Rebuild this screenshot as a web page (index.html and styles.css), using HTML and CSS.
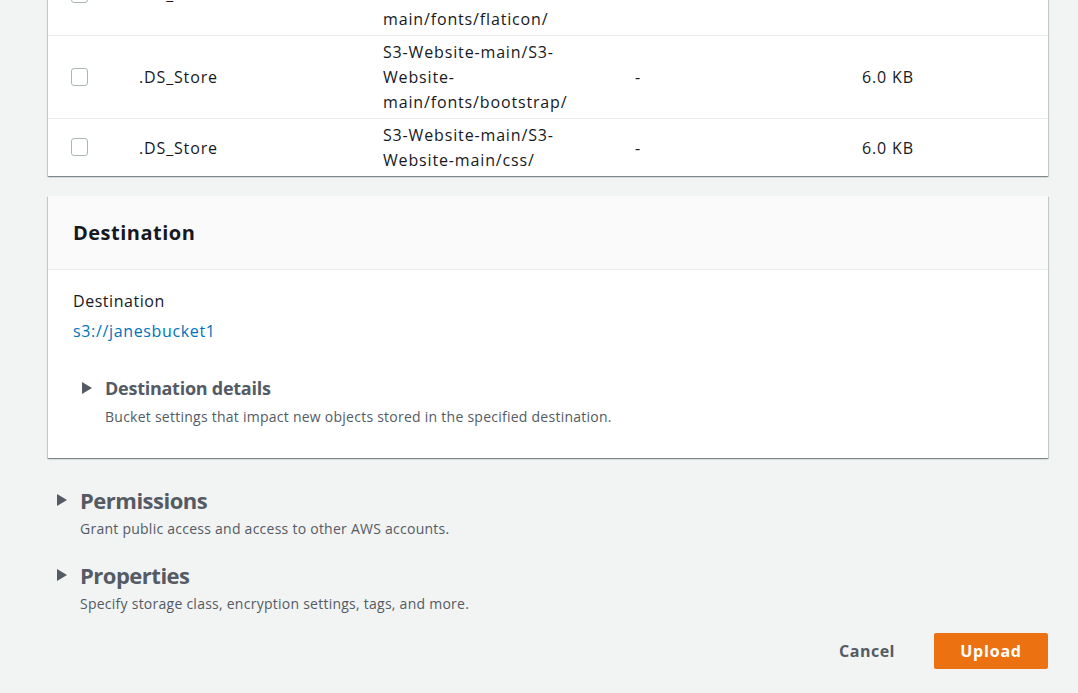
FILE: index.html
```html
<!DOCTYPE html>
<html>
<head>
<meta charset="utf-8">
<link rel="stylesheet" href="styles.css">
</head>
<body>
<div class="page">
  <div class="card files">
    <div class="row">
      <span class="cb"></span>
      <span class="name">.DS_Store</span>
      <span class="path">S3-Website-main/S3-Website-main/fonts/flaticon/</span>
      <span class="type">-</span>
      <span class="size">6.0 KB</span>
    </div>
    <div class="row">
      <span class="cb"></span>
      <span class="name">.DS_Store</span>
      <span class="path">S3-Website-main/S3-Website-main/fonts/bootstrap/</span>
      <span class="type">-</span>
      <span class="size">6.0 KB</span>
    </div>
    <div class="row">
      <span class="cb"></span>
      <span class="name">.DS_Store</span>
      <span class="path">S3-Website-main/S3-Website-main/css/</span>
      <span class="type">-</span>
      <span class="size">6.0 KB</span>
    </div>
  </div>

  <div class="card dest">
    <div class="card-header"><h2>Destination</h2></div>
    <div class="card-body">
      <div class="label">Destination</div>
      <a class="link" href="#">s3://janesbucket1</a>
      <div class="expander small">
        <span class="caret"></span>
        <div>
          <div class="exp-title">Destination details</div>
          <div class="exp-desc">Bucket settings that impact new objects stored in the specified destination.</div>
        </div>
      </div>
    </div>
  </div>

  <div class="expander big">
    <span class="caret"></span>
    <div>
      <div class="exp-title">Permissions</div>
      <div class="exp-desc">Grant public access and access to other AWS accounts.</div>
    </div>
  </div>
  <div class="expander big">
    <span class="caret"></span>
    <div>
      <div class="exp-title">Properties</div>
      <div class="exp-desc">Specify storage class, encryption settings, tags, and more.</div>
    </div>
  </div>

  <div class="actions">
    <button class="btn-link">Cancel</button>
    <button class="btn-primary">Upload</button>
  </div>
</div>
</body>
</html>
```

FILE: styles.css
```css
* { box-sizing: border-box; }
html, body {
  margin: 0;
  padding: 0;
  background: #f2f3f3;
  height: 100%;
  overflow: hidden;
}
body {
  font-family: "Open Sans", "Noto Sans", sans-serif;
  color: #16191f;
  font-size: 16px;
}
.page {
  width: 1000px;
  margin-left: 48px;
  margin-top: -47px;
}
.card {
  background: #fff;
  box-shadow: 0 1px 1px 0 rgba(0,28,36,.3), 1px 1px 1px 0 rgba(0,28,36,.15), -1px 1px 1px 0 rgba(0,28,36,.15);
}
.row {
  display: grid;
  grid-template-columns: 68px 244px 252px 227px 1fr;
  align-items: center;
  padding: 4px 0 3px 23px;
  border-top: 1px solid #eaeded;
  line-height: 25px;
  font-size: 16px;
  letter-spacing: 0.85px;
}
.row:first-child { border-top: none; }
.cb {
  width: 17px;
  height: 18px;
  border: 1px solid #aab7b8;
  border-radius: 3px;
  background: #fff;
  margin-top: -2px;
}
.path { width: 215px; }
.dest { margin-top: 20px; }
.card-header {
  background: #fafafa;
  border-bottom: 1px solid #eaeded;
  height: 74px;
  display: flex;
  align-items: center;
  padding: 0 25px 1px;
}
.card-header h2 {
  margin: 0;
  font-size: 20px;
  font-weight: 700;
  letter-spacing: 0.5px;
  color: #16191f;
}
.card-body {
  padding: 19px 25px 30px;
}
.label { line-height: 24px; font-size: 16px; letter-spacing: 0.55px; }
.link {
  display: block;
  color: #0073bb;
  text-decoration: none;
  line-height: 24px;
  margin-top: 6px;
  letter-spacing: 0.65px;
}
.expander {
  display: flex;
  align-items: flex-start;
}
.caret {
  width: 0; height: 0;
  border-top: 6px solid transparent;
  border-bottom: 6px solid transparent;
  border-left: 10px solid #545b64;
}
.exp-desc { letter-spacing: 0.25px; }
.expander.small { margin-top: 32px; padding-left: 9px; gap: 13px; }
.expander.small .caret { margin-top: 7px; }
.expander.small .exp-title {
  font-size: 18px; font-weight: 700; color: #545b64; line-height: 26px; letter-spacing: -0.26px;
}
.expander.small .exp-desc {
  font-size: 14px; color: #545b64; line-height: 22px; margin-top: 5px;
}
.expander.big { padding-left: 9px; gap: 13px; }
.expander.big + .expander.big { margin-top: 19px; }
.card.dest + .expander.big { margin-top: 26px; }
.expander.big .caret { margin-top: 10px; }
.expander.big .exp-title {
  font-size: 22px; font-weight: 700; color: #545b64; line-height: 32px; letter-spacing: -0.5px;
}
.expander.big .exp-desc {
  font-size: 14px; color: #545b64; line-height: 22px; margin-top: 2px;
}
.actions {
  display: flex;
  justify-content: flex-end;
  align-items: center;
  gap: 19px;
  margin-top: 18px;
}
.btn-link, .btn-primary {
  font-family: inherit;
  font-size: 16px;
  font-weight: 700;
  border: none;
  height: 36px;
  padding: 0 20px;
  border-radius: 2px;
  cursor: pointer;
}
.btn-link { background: transparent; color: #545b64; letter-spacing: 0.5px; }
.btn-primary { background: #ec7211; color: #fff; width: 114px; letter-spacing: 0.8px; }
```
